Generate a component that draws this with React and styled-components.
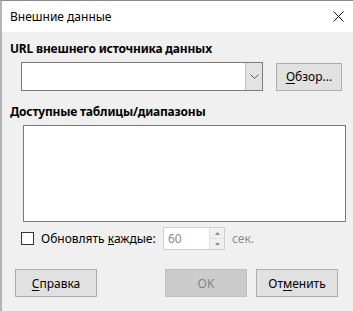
import React from "react";
import styled, { createGlobalStyle } from "styled-components";

const Global = createGlobalStyle`
  body {
    margin: 0;
    background: #f0f0f0;
    font-family: "Noto Sans", "Open Sans", sans-serif;
    font-size: 12px;
    color: #000;
  }
`;

const Window = styled.div`
  width: 351px;
  height: 310px;
  border-top: 1px solid #8a8a8a;
  border-left: 2px solid #b4b4b4;
  background: #f0f0f0;
  display: flex;
  flex-direction: column;
  overflow: hidden;
`;

const TitleBar = styled.div`
  height: 31px;
  background: #fff;
  display: flex;
  align-items: center;
  justify-content: space-between;
  padding: 0 9px 0 8px;
`;

const Title = styled.span`
  font-size: 12px;
`;

const Body = styled.div`
  padding: 9px 0 0 8px;
  display: flex;
  flex-direction: column;
`;

const Label = styled.div`
  font-weight: bold;
  font-size: 12px;
  line-height: 16px;
  letter-spacing: -0.2px;
  margin-top: ${(p) => p.top || 0}px;
`;

const Row = styled.div`
  display: flex;
  align-items: center;
  margin-left: ${(p) => p.left || 0}px;
  margin-top: ${(p) => p.top || 0}px;
`;

const Combo = styled.div`
  width: 240px;
  height: 27px;
  border: 1px solid #7a7a7a;
  background: #fff;
  display: flex;
  justify-content: flex-end;
`;

const ComboArrow = styled.div`
  width: 16px;
  border-left: 1px solid #c4c4c4;
  background: #e3e3e3;
  display: flex;
  align-items: center;
  justify-content: center;
`;

const Button = styled.button`
  width: ${(p) => p.w || 82}px;
  height: 28px;
  margin-left: ${(p) => p.ml || 0}px;
  background: ${(p) => (p.disabled ? "#cccccc" : "#e1e1e1")};
  border: 1px solid ${(p) => (p.disabled ? "#bfbfbf" : "#adadad")};
  color: ${(p) => (p.disabled ? "#838383" : "#000")};
  font-family: "Noto Sans", "Open Sans", sans-serif;
  font-size: 12px;
  padding: 0;
  u {
    text-decoration: underline;
    text-underline-offset: 2px;
  }
`;

const ListBox = styled.div`
  margin-left: 13px;
  margin-top: 5px;
  width: 321px;
  height: 95px;
  border: 1px solid #7a7a7a;
  background: #fff;
`;

const CheckBox = styled.div`
  width: 11px;
  height: 11px;
  border: 1px solid #333;
  background: #fff;
`;

const CheckLabel = styled.span`
  margin-left: 7px;
  width: 122px;
`;

const Spin = styled.div`
  width: 60px;
  height: 21px;
  border: 1px solid #cfcfcf;
  background: #fff;
  display: flex;
  justify-content: space-between;
`;

const SpinValue = styled.span`
  color: #8a8a8a;
  padding-left: 4px;
  line-height: 21px;
`;

const SpinButtons = styled.div`
  width: 14px;
  display: flex;
  flex-direction: column;
  border-left: 1px solid #e0e0e0;
`;

const SpinPart = styled.div`
  flex: 1;
  background: #f0f0f0;
  display: flex;
  align-items: center;
  justify-content: center;
  & + & {
    border-top: 1px solid #e0e0e0;
  }
`;

const Muted = styled.span`
  color: #8a8a8a;
  margin-left: 7px;
`;

const Chevron = () => (
  <svg width="9" height="5" viewBox="0 0 9 5">
    <path d="M0.5 0.5 L4.5 4.5 L8.5 0.5" fill="none" stroke="#606060" strokeWidth="1" />
  </svg>
);

const Tri = ({ up }) => (
  <svg width="5" height="3" viewBox="0 0 5 3">
    <path d={up ? "M0 3 L2.5 0 L5 3 Z" : "M0 0 L2.5 3 L5 0 Z"} fill="#8a8a8a" />
  </svg>
);

const Close = () => (
  <svg width="11" height="11" viewBox="0 0 11 11">
    <path d="M0.5 0.5 L10.5 10.5 M10.5 0.5 L0.5 10.5" stroke="#111" strokeWidth="1" />
  </svg>
);

const App = () => (
  <>
    <Global />
    <Window>
      <TitleBar>
        <Title>Внешние данные</Title>
        <Close />
      </TitleBar>
      <Body>
        <Label>URL внешнего источника данных</Label>
        <Row left={11} top={5}>
          <Combo>
            <ComboArrow>
              <Chevron />
            </ComboArrow>
          </Combo>
          <Button w={66} ml={13}>
            <u>О</u>бзор...
          </Button>
        </Row>
        <Label top={13}>Доступные таблицы/диапазоны</Label>
        <ListBox />
        <Row left={11} top={5}>
          <CheckBox />
          <CheckLabel>
            Обновлять <u>к</u>аждые:
          </CheckLabel>
          <Spin>
            <SpinValue>60</SpinValue>
            <SpinButtons>
              <SpinPart>
                <Tri up />
              </SpinPart>
              <SpinPart>
                <Tri />
              </SpinPart>
            </SpinButtons>
          </Spin>
          <Muted>сек.</Muted>
        </Row>
        <Row left={5} top={19}>
          <Button>
            <u>С</u>правка
          </Button>
          <Button ml={68} disabled>
            OK
          </Button>
          <Button ml={9}>
            От<u>м</u>енить
          </Button>
        </Row>
      </Body>
    </Window>
  </>
);

export default App;
